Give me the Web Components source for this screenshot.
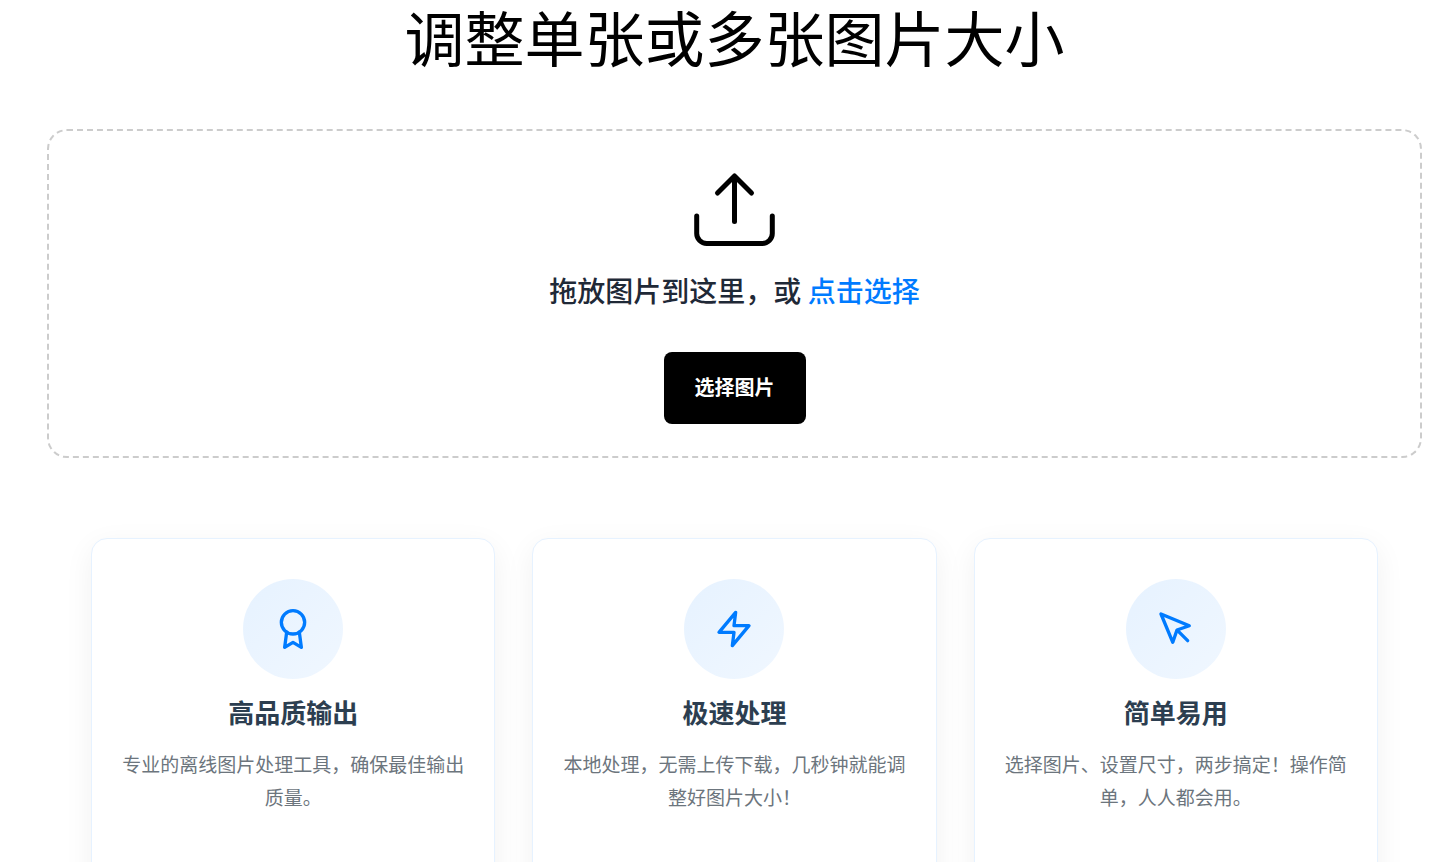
<!DOCTYPE html>
<html lang="zh-CN">
<head>
<meta charset="utf-8">
<meta name="viewport" content="width=device-width, initial-scale=1">
<title>调整图片大小</title>
<style>
  body {
    margin: 0;
    background: #fff;
    color: #000;
    font-family: "Noto Sans CJK SC", sans-serif;
  }
</style>
</head>
<body>
<resize-page></resize-page>

<template id="page-template">
  <style>
    :host { display: block; padding: 0 25px 40px 47px; }
    h1 {
      margin: 0 0 57px;
      font-size: 60px;
      line-height: 72px;
      font-weight: 400;
      text-align: center;
    }
    .features {
      display: grid;
      grid-template-columns: repeat(auto-fit, minmax(300px, 1fr));
      gap: 37px;
      margin: 80px 44px 0;
    }
  </style>
  <main>
    <h1>调整单张或多张图片大小</h1>
    <drop-zone></drop-zone>
    <section class="features">
      <feature-card>
        <svg slot="icon" viewBox="0 0 24 24"><circle cx="12" cy="8" r="7"/><polyline points="8.21 13.89 7 23 12 20 17 23 15.79 13.88"/></svg>
        <span slot="title">高品质输出</span>
        专业的离线图片处理工具，确保最佳输出质量。
      </feature-card>
      <feature-card>
        <svg slot="icon" viewBox="0 0 24 24"><polygon points="13 2 3 14 12 14 11 22 21 10 12 10 13 2"/></svg>
        <span slot="title">极速处理</span>
        本地处理，无需上传下载，几秒钟就能调整好图片大小！
      </feature-card>
      <feature-card>
        <svg slot="icon" viewBox="0 0 24 24"><path d="M3 3l7.07 16.97 2.51-7.39 7.39-2.51L3 3z"/><path d="M13 13l6 6"/></svg>
        <span slot="title">简单易用</span>
        选择图片、设置尺寸，两步搞定！操作简单，人人都会用。
      </feature-card>
    </section>
  </main>
</template>

<template id="drop-template">
  <style>
    :host {
      display: flex;
      flex-direction: column;
      align-items: center;
      padding: 32px;
      border: 2px dashed #ccc;
      border-radius: 20px;
    }
    svg {
      width: 100px;
      height: 100px;
      fill: none;
      stroke: #000;
      stroke-width: 5;
      stroke-linecap: round;
      stroke-linejoin: round;
    }
    p {
      margin: 8px 0 42px;
      font-size: 28px;
      line-height: 39px;
      font-weight: 500;
      color: #1f2937;
      text-align: center;
    }
    a { color: #007bff; text-decoration: none; }
    button {
      padding: 15px 31px 17px;
      border: 0;
      border-radius: 8px;
      background: #000;
      color: #fff;
      font: inherit;
      font-size: 20px;
      line-height: 40px;
      font-weight: 700;
      cursor: pointer;
    }
  </style>
  <svg viewBox="0 0 100 100" aria-hidden="true">
    <path d="M49.500 13.500V58.500M32.500 30L49.500 13L66.500 30"/>
    <path d="M11.700 53V70.500a10 10 0 0 0 10 10H77.300a10 10 0 0 0 10-10V53"/>
  </svg>
  <p>拖放图片到这里，或 <a href="#select">点击选择</a></p>
  <button type="button">选择图片</button>
</template>

<template id="card-template">
  <style>
    :host {
      display: flex;
      flex-direction: column;
      align-items: center;
      box-sizing: border-box;
      min-height: 360px;
      padding: 40px 30px;
      border: 1px solid #e6f2ff;
      border-radius: 16px;
      background: #fff;
      box-shadow: 0 8px 30px rgba(0, 0, 0, .06);
      text-align: center;
    }
    .badge {
      display: grid;
      place-items: center;
      width: 100px;
      height: 100px;
      border-radius: 50%;
      background: linear-gradient(135deg, #e6f2ff, #f0f7ff);
    }
    ::slotted(svg) {
      width: 40px;
      height: 40px;
      fill: none;
      stroke: #007bff;
      stroke-width: 2;
      stroke-linecap: round;
      stroke-linejoin: round;
    }
    h3 {
      margin: 14px 0 16px;
      font-size: 26px;
      line-height: 38px;
      font-weight: 700;
      color: #2c3e50;
    }
    p {
      margin: 0;
      font-size: 19px;
      line-height: 33px;
      color: #6c757d;
    }
  </style>
  <div class="badge"><slot name="icon"></slot></div>
  <h3><slot name="title"></slot></h3>
  <p><slot></slot></p>
</template>

<script>
  const define = (name, templateId) => {
    customElements.define(name, class extends HTMLElement {
      constructor() {
        super();
        const template = document.getElementById(templateId);
        this.attachShadow({ mode: "open" }).append(template.content.cloneNode(true));
      }
    });
  };
  define("feature-card", "card-template");
  define("drop-zone", "drop-template");
  define("resize-page", "page-template");
</script>
</body>
</html>
